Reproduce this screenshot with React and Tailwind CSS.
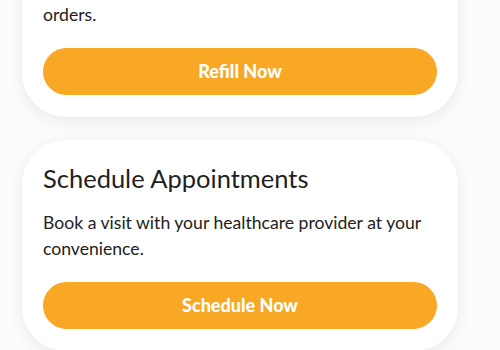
import React from "react";

const cards = [
  {
    title: "Refill Prescriptions",
    text: (
      <>
        Request refills and keep track of your
        <br />
        orders.
      </>
    ),
    action: "Refill Now",
  },
  {
    title: "Schedule Appointments",
    text: "Book a visit with your healthcare provider at your convenience.",
    action: "Schedule Now",
  },
];

const ServiceCard = ({ title, text, action }) => (
  <div className="w-[436px] rounded-[44px] bg-white px-[21px] pt-[22px] pb-[22px] shadow-[0_4px_16px_rgba(0,0,0,0.08)]">
    <h2 className="text-[25.5px] leading-[32px] text-[#1f1f1f]">{title}</h2>
    <p className="mt-[16px] text-[17.6px] leading-[26px] text-[#222]">{text}</p>
    <button className="mt-[20px] h-[47px] w-full rounded-full bg-[#f9a826] text-[18px] font-black text-white">
      {action}
    </button>
  </div>
);

export default function App() {
  return (
    <div
      className="h-[350px] w-[500px] overflow-hidden bg-[#fcfcfc]"
      style={{ fontFamily: "Lato, 'Noto Sans', sans-serif" }}
    >
      <div className="-mt-[94px] ml-[22px] flex flex-col gap-[23px]">
        {cards.map((c) => (
          <ServiceCard key={c.action} {...c} />
        ))}
      </div>
    </div>
  );
}
